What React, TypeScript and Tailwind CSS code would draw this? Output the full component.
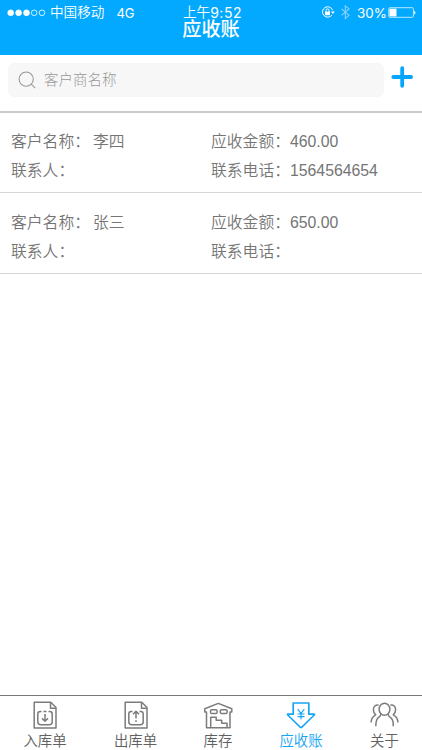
import type { ReactNode } from "react";

type Account = { name: string; amount: string; contact: string; phone: string };

const accounts: Account[] = [
  { name: "李四", amount: "460.00", contact: "", phone: "1564564654" },
  { name: "张三", amount: "650.00", contact: "", phone: "" },
];

function StatusBar() {
  return (
    <div className="grid h-[18px] grid-cols-[183px_1fr_101px] items-center pt-[5px] text-[13.6px] leading-[13px]">
      <div className="flex items-center pl-[7px]">
        <svg width="39" height="10" viewBox="0 0 39 10" fill="none" stroke="white" strokeWidth="0.8">
          <circle cx="3.7" cy="4.8" r="2.9" fill="white" />
          <circle cx="11.6" cy="4.8" r="2.9" fill="white" />
          <circle cx="19.5" cy="4.8" r="2.9" fill="white" />
          <circle cx="27.2" cy="4.8" r="2.8" />
          <circle cx="35" cy="4.8" r="2.8" />
        </svg>
        <span className="ml-[4px]">中国移动</span>
        <span className="ml-[12px] font-['Inter'] text-[13px] leading-[12px] font-normal">4G</span>
      </div>
      <div className="flex items-center whitespace-nowrap">
        上午<span className="font-['Inter'] text-[14px] leading-[12px] font-normal tracking-[0.5px]">9:52</span>
      </div>
      <div className="flex items-center">
        <svg width="14" height="14" viewBox="0 0 14 14" fill="none" stroke="white" strokeWidth="1">
          <path d="M11.6 4.2A5.2 5.2 0 1 0 11 8.9" />
          <path d="M10 5.5h3.8L11.9 8z" fill="white" stroke="none" />
          <rect x="4" y="5.6" width="5" height="3.6" fill="white" stroke="none" />
          <path d="M5 6V4.4a1.5 1.5 0 0 1 3 0V6" />
        </svg>
        <svg className="ml-[6px]" width="9" height="15" viewBox="0 0 9 15" fill="none" stroke="#83d3ff" strokeWidth="1.1">
          <path d="M.5 3.8 8 10.3 4.3 13.5V.8L8 3.9.5 10.4" />
        </svg>
        <span className="ml-[7px] w-[29px] font-['Inter'] text-[13.4px] leading-[12px] font-normal">30%</span>
        <svg className="ml-[2px]" width="28" height="12" viewBox="0 0 28 12" fill="none">
          <rect x=".8" y=".7" width="24.6" height="9.6" rx="1" stroke="#b8e6ff" strokeWidth="1" />
          <path d="M1.5 1.7h7v7.7h-7z" fill="white" />
          <path d="M26.2 3.7c1.6.4 1.6 3.4 0 3.8z" fill="white" />
        </svg>
      </div>
    </div>
  );
}

function Field({ label, value, spaced = false }: { label: string; value: string; spaced?: boolean }) {
  return (
    <div className="flex whitespace-nowrap">
      <span>{label}：</span>
      <span className={spaced ? "ml-[3px]" : ""}>{value}</span>
    </div>
  );
}

function AccountRow({ account }: { account: Account }) {
  return (
    <li className="grid h-[81px] grid-cols-[200px_1fr] grid-rows-[29px_29px] border-b border-[#d6d6d6] pt-[15px] pl-[11px] text-[15.8px] leading-[29px] text-[#757575] first:h-[80px] first:pt-[14px]">
      <Field label="客户名称" value={account.name} spaced />
      <Field label="应收金额" value={account.amount} />
      <Field label="联系人" value={account.contact} />
      <Field label="联系电话" value={account.phone} />
    </li>
  );
}

function Tab({ label, width, active = false, children }: { label: string; width: string; active?: boolean; children: ReactNode }) {
  return (
    <div className={`flex flex-col items-center pt-[4px] ${width} ${active ? "text-[#16a5f5]" : "text-[#606060]"}`}>
      <svg width="32" height="30" viewBox="0 0 32 30" fill="none" stroke={active ? "#16a5f5" : "#7c7c7c"} strokeWidth="1.5" strokeLinejoin="round">
        {children}
      </svg>
      <span className="mt-[2px] text-[14.4px] leading-[18px]">{label}</span>
    </div>
  );
}

function DocumentOutline() {
  return (
    <>
      <path d="M5.2 2.3h16.6l5.2 5.2V28H5.2z" />
      <path d="M21.5 2.7v5.5H27" />
      <path d="M12.5 11.5h-1.3q-2.4 0-2.4 2.5v7.7q0 3 3 3h8.4q3 0 3-3V14q0-2.5-2.4-2.5h-1.3" />
    </>
  );
}

export default function App() {
  return (
    <div className="flex h-[750px] w-[422px] flex-col overflow-hidden bg-white font-['Liberation_Sans','Noto_Sans_CJK_SC',sans-serif] font-[350]">
      <header className="h-[55px] shrink-0 bg-[#03a9fe] text-white">
        <StatusBar />
        <h1 className="pt-[2px] text-center text-[19.2px] leading-[19px] font-medium">应收账</h1>
      </header>
      <div className="flex h-[58px] shrink-0 border-b-2 border-[#cacaca] pt-[8px] pl-[8px]">
        <label className="flex h-[34px] w-[376px] items-center rounded-[6px] bg-[#f7f7f7] pl-[10px] text-[#999]">
          <svg width="18" height="18" viewBox="0 0 18 18" fill="none" stroke="#999" strokeWidth="1.1">
            <circle cx="8.2" cy="8.1" r="7.1" />
            <path d="m13.2 13.2 4 4" />
          </svg>
          <span className="ml-[8px] pt-[2px] text-[14.5px] font-light">客户商名称</span>
        </label>
        <svg className="mt-[3px] ml-[7px]" width="22" height="22" viewBox="0 0 22 22" stroke="#06a6fb" strokeWidth="3.8" strokeLinecap="round">
          <path d="M11.2 2.2v17.6M2.3 11h17.8" />
        </svg>
      </div>
      <ul className="flex-1">
        {accounts.map((account) => (
          <AccountRow key={account.name} account={account} />
        ))}
      </ul>
      <nav className="flex h-[55px] shrink-0 border-t border-[#777]">
        <Tab label="入库单" width="w-[90px]">
          <DocumentOutline />
          <path d="M14.5 11.5h3M16 14v7m-3-2.6 3 2.8 3-2.8" />
        </Tab>
        <Tab label="出库单" width="w-[91px]">
          <DocumentOutline />
          <path d="M16 22v-1.8M16 18.4V11.5m-3 2.8 3-2.9 3 2.9" />
        </Tab>
        <Tab label="库存" width="w-[74px]">
          <path d="M4.5 27.7V12H2.8V8.8l13.5-5.4 13.5 5.4V12H28v15.7z" />
          <rect x="8.5" y="9.7" width="6.6" height="3.9" rx="1.3" />
          <rect x="18.3" y="9.7" width="6.8" height="3.9" rx="1.3" />
          <path d="M8.7 27.5V17.2h5.5v3h5.5v3h5.3v4.3" />
        </Tab>
        <Tab label="应收账" width="w-[92px]" active>
          <path d="M8.2 3h15.6v11.2h5.4q.6 0 0 .8L17 27q-1 .8-2 0L2.8 15q-.6-.8 0-.8h5.4z" strokeWidth="1.7" />
          <path d="m12.7 9 3.3 4.7L19.3 9M16 13.5v5.8M12.5 14h7M12.5 16.7h7" strokeWidth="1.2" />
        </Tab>
        <Tab label="关于" width="w-[75px]">
          <ellipse cx="15.5" cy="9.3" rx="5.4" ry="6" />
          <path d="M12 14c-.2 2-1.3 2.5-2.5 3.4-2 1.6-2.7 3.8-2.7 8.8M19 14c.2 2 1.3 2.5 2.5 3.4 1.6 1.3 2.4 3 2.7 5v3.8" />
          <path d="M9.6 5c-3.2-.4-5.2 1.7-5.2 4.7 0 2.4 1 3.9 2.3 5.2-3 1.6-4.5 3.8-4.6 7.6M21.4 5c3.2-.4 5.2 1.7 5.2 4.7 0 2.4-1 3.9-2.3 5.2 3 1.6 4.5 3.8 4.6 7.6" />
        </Tab>
      </nav>
    </div>
  );
}
